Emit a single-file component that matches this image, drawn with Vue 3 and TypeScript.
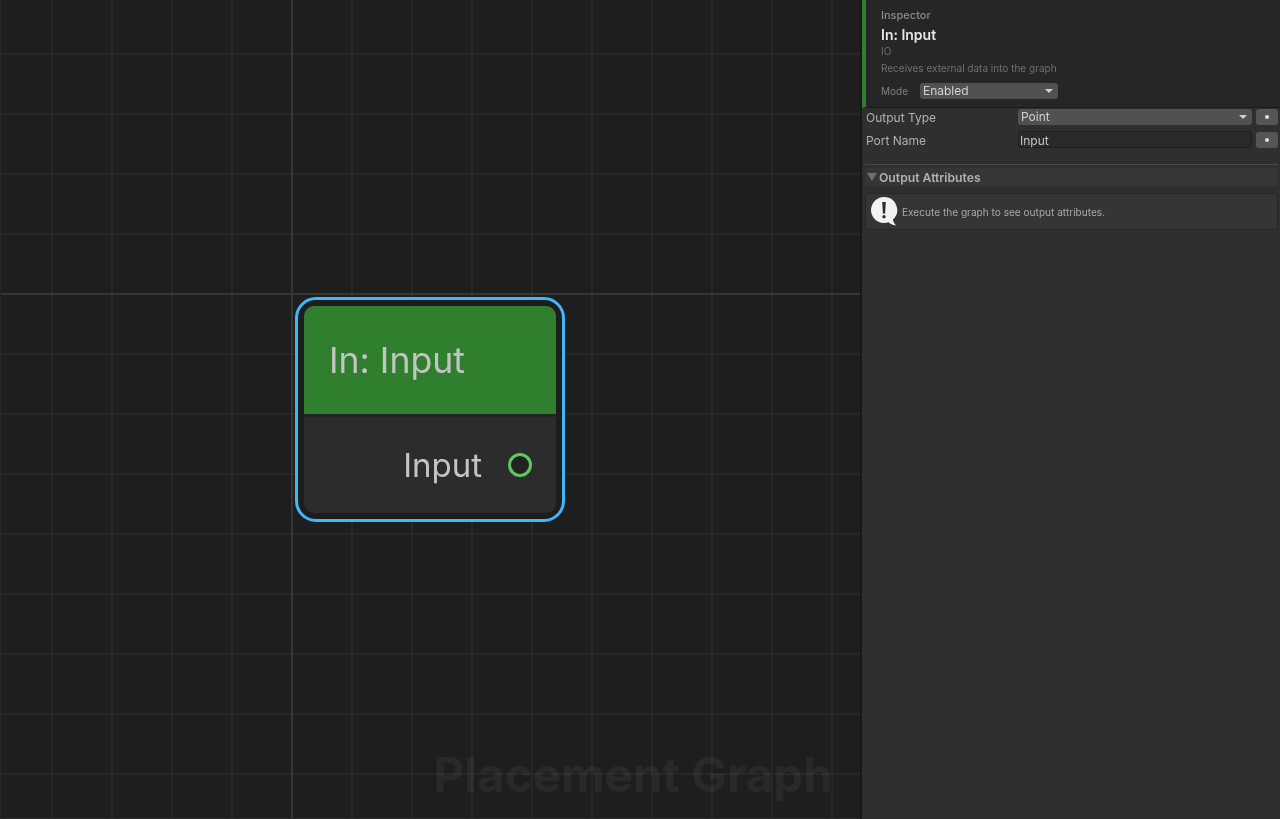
<template>
  <div class="editor">
    <!-- graph canvas -->
    <div class="canvas">
      <div class="node">
        <div class="node-inner">
          <div class="node-title">In: Input</div>
          <div class="node-body">
            <span class="port-label">Input</span>
            <span class="port-dot"></span>
          </div>
        </div>
      </div>
      <div class="watermark">Placement Graph</div>
    </div>

    <!-- inspector -->
    <div class="panel">
      <div class="head">
        <div class="head-kicker">Inspector</div>
        <div class="head-title">In: Input</div>
        <div class="head-sub">IO</div>
        <div class="head-desc">Receives external data into the graph</div>
        <div class="mode-row">
          <span class="mode-label">Mode</span>
          <div class="select mode-select">
            <span>Enabled</span>
            <i class="caret"></i>
          </div>
        </div>
      </div>

      <div class="props">
        <div v-for="row in rows" :key="row.label" class="prop-row">
          <span class="prop-label">{{ row.label }}</span>
          <div v-if="row.kind === 'select'" class="select prop-field">
            <span>{{ row.value }}</span>
            <i class="caret"></i>
          </div>
          <div v-else class="text-field prop-field">{{ row.value }}</div>
          <button class="dot-btn"><i></i></button>
        </div>

        <div class="divider"></div>
        <div class="foldout">
          <i class="fold-caret"></i>
          <span>Output Attributes</span>
        </div>
        <div class="help">
          <svg class="help-icon" viewBox="0 0 28 32" width="28" height="32">
            <path d="M14 1a13 13 0 1 0 4.5 25.2c1.6 1.5 3.6 2.6 7.5 3.3-1.7-1.7-2.7-3.4-3.1-5.9A13 13 0 0 0 14 1z" fill="#f2f2f2" />
            <path d="M12.2 6h3.6l-.7 11.6h-2.2z" fill="#2b2b2b" />
            <circle cx="14" cy="20.8" r="1.7" fill="#2b2b2b" />
          </svg>
          <span>Execute the graph to see output attributes.</span>
        </div>
      </div>
    </div>
  </div>
</template>

<script setup lang="ts">
const rows = [
  { label: 'Output Type', value: 'Point', kind: 'select' },
  { label: 'Port Name', value: 'Input', kind: 'text' }
];
</script>

<style>
html, body {
  margin: 0;
  background: #1e1e1e;
}
</style>

<style scoped>
.editor {
  display: flex;
  width: 1280px;
  height: 819px;
  overflow: hidden;
  font-family: Inter, "Liberation Sans", sans-serif;
  will-change: transform;
}

.canvas {
  position: relative;
  width: 860px;
  flex: none;
  overflow: hidden;
  background-color: #1e1e1e;
  background-image:
    linear-gradient(#363636, #363636),
    linear-gradient(#363636, #363636),
    linear-gradient(90deg, #272727 2px, transparent 2px),
    linear-gradient(#272727 2px, transparent 2px);
  background-size: 2px 100%, 100% 2px, 60px 60px, 60px 60px;
  background-repeat: no-repeat, no-repeat, repeat, repeat;
  background-position: 291px 0, 0 293px, 51px 0, 0 53px;
  box-shadow: inset 1px 0 0 #272727, inset 0 -1px 0 #2a2a2a;
}

.node {
  position: absolute;
  left: 295px;
  top: 297px;
  width: 270px;
  height: 225px;
  box-sizing: border-box;
  border: 3px solid #3fb7fb;
  border-radius: 21px;
  background: #1d1d1d;
  padding: 6px;
}

.node-inner {
  height: 100%;
  display: flex;
  flex-direction: column;
  border-radius: 10px;
  overflow: hidden;
  background: #232323;
}

.node-title {
  height: 108px;
  flex: none;
  box-sizing: border-box;
  padding: 1px 0 0 25px;
  display: flex;
  align-items: center;
  background: #2f7f2f;
  color: #c4c4c4;
  font-size: 35.6px;
  line-height: 1;
}

.node-body {
  flex: 1;
  margin-top: 3px;
  display: flex;
  align-items: center;
  justify-content: flex-end;
  gap: 26px;
  padding-right: 24px;
  background: #2c2c2c;
}

.port-label {
  color: #c4c4c4;
  font-size: 33px;
}

.port-dot {
  width: 24px;
  height: 24px;
  box-sizing: border-box;
  border: 3px solid #5ec95e;
  border-radius: 50%;
  background: #222;
}

.watermark {
  position: absolute;
  right: 27px;
  bottom: 16px;
  color: rgba(255, 255, 255, 0.05);
  font-size: 47.6px;
  font-weight: 700;
  line-height: 1.2;
}

.panel {
  flex: 1;
  display: flex;
  flex-direction: column;
  border-left: 2px solid #181818;
  background: #2f2f2f;
  color: #c4c4c4;
}

.head {
  height: 108px;
  box-sizing: border-box;
  flex: none;
  border-left: 4px solid #2f7f2f;
  border-bottom: 1px solid #1a1a1a;
  background: #262626;
  padding: 9px 0 0 15px;
}

.head-kicker {
  color: #8c8c8c;
  font-size: 11px;
  line-height: 13px;
  font-weight: 500;
}

.head-title {
  margin-top: 5px;
  color: #e6e6e6;
  font-size: 14px;
  line-height: 16px;
  font-weight: 600;
}

.head-sub {
  margin-top: 2px;
  color: #707070;
  font-size: 10px;
  line-height: 12px;
}

.head-desc {
  margin-top: 5px;
  color: #707070;
  font-size: 10px;
  line-height: 13px;
}

.mode-row {
  margin-top: 8px;
  display: flex;
  align-items: center;
  gap: 12px;
}

.mode-label {
  color: #808080;
  font-size: 10px;
}

.select {
  height: 16px;
  box-sizing: border-box;
  display: flex;
  align-items: center;
  justify-content: space-between;
  padding: 0 5px 1px 3px;
  background: #515151;
  border-radius: 3px;
  color: #d2d2d2;
  font-size: 12px;
}

.mode-select {
  width: 138px;
}

.caret {
  width: 0;
  height: 0;
  margin-top: 1px;
  border-left: 4px solid transparent;
  border-right: 4px solid transparent;
  border-top: 4px solid #d0d0d0;
}

.props {
  padding: 0 2px 0 4px;
}

.prop-row {
  display: flex;
  align-items: center;
  height: 16px;
  margin-top: 1px;
  margin-bottom: 7px;
}

.prop-label {
  width: 152px;
  flex: none;
  color: #b0b0b0;
  font-size: 12px;
  line-height: 15px;
}

.prop-field {
  width: 234px;
  flex: none;
}

.text-field {
  height: 17px;
  align-self: flex-start;
  margin-top: -1px;
  box-sizing: border-box;
  padding-left: 1px;
  border: 1px solid #1e1e1e;
  border-radius: 3px;
  background: #2a2a2a;
  color: #c4c4c4;
  font-size: 12px;
  line-height: 17px;
}

.dot-btn {
  width: 22px;
  height: 16px;
  margin-left: 4px;
  padding: 0;
  border: 0;
  border-radius: 3px;
  background: #555;
  display: flex;
  align-items: center;
  justify-content: center;
}

.dot-btn i {
  width: 4px;
  height: 4px;
  border-radius: 2px;
  background: #e0e0e0;
}

.divider {
  height: 1px;
  margin: 16px 0 0 -1px;
  background: #4a4a4a;
}

.foldout {
  height: 18px;
  margin: 3px 0 0 -1px;
  display: flex;
  align-items: center;
  gap: 2px;
  padding-left: 2px;
  background: #363636;
  color: #b0b0b0;
  font-size: 12.2px;
  font-weight: 600;
}

.fold-caret {
  width: 0;
  height: 0;
  border-left: 5px solid transparent;
  border-right: 5px solid transparent;
  border-top: 8px solid #6e6e6e;
}

.help {
  height: 37px;
  box-sizing: border-box;
  margin: 7px 0 0 -1px;
  display: flex;
  align-items: center;
  gap: 4px;
  padding-left: 4px;
  border: 1px solid #262626;
  border-radius: 3px;
  background: #353535;
  color: #a8a8a8;
  font-size: 10.1px;
}

.help-icon {
  flex: none;
}
</style>
